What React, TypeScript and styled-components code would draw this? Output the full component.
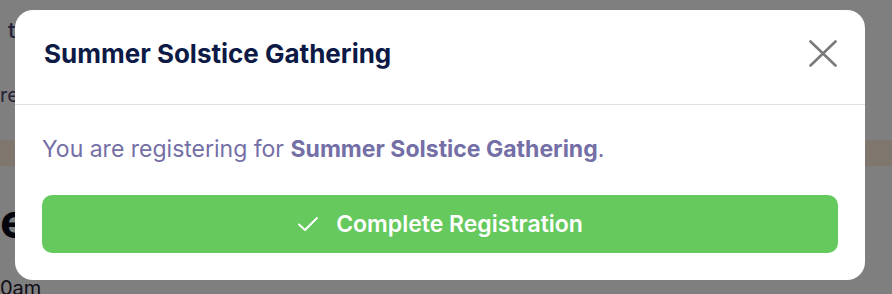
import React from "react";
import styled, { createGlobalStyle } from "styled-components";

const GlobalStyle = createGlobalStyle`
  * { box-sizing: border-box; }
  html, body {
    margin: 0;
    padding: 0;
    width: 892px;
    height: 294px;
    overflow: hidden;
    background: #ffffff;
    font-family: Inter, "Noto Sans", sans-serif;
  }
`;

const Page = styled.div`
  position: relative;
  width: 892px;
  height: 294px;
  overflow: hidden;
`;

const PageContent = styled.div`
  display: flex;
  flex-direction: column;
`;

const PageLine = styled.div<{ $indent: number; $size: number; $weight: number; $color: string; $height: number }>`
  height: ${(p) => p.$height}px;
  padding-left: ${(p) => p.$indent}px;
  font-size: ${(p) => p.$size}px;
  font-weight: ${(p) => p.$weight};
  color: ${(p) => p.$color};
  line-height: ${(p) => p.$height}px;
  white-space: nowrap;
`;

const Strip = styled.div`
  height: 26px;
  background: #ffeedd;
`;

const Overlay = styled.div`
  position: absolute;
  inset: 0;
  background: rgba(0, 0, 0, 0.5);
  display: flex;
  align-items: flex-start;
  justify-content: flex-start;
  padding: 10px 0 0 15px;
`;

const Modal = styled.div`
  width: 850px;
  height: 270px;
  background: #ffffff;
  border-radius: 18px;
  display: flex;
  flex-direction: column;
  overflow: hidden;
`;

const Header = styled.div`
  height: 95px;
  padding: 0 28px 7px 29px;
  display: flex;
  align-items: center;
  justify-content: space-between;
  border-bottom: 1px solid #e3e3e6;
`;

const Title = styled.h2`
  margin: 0;
  font-size: 26px;
  font-weight: 700;
  color: #0c1a45;
`;

const Close = styled.button`
  border: none;
  background: none;
  padding: 0;
  width: 30px;
  height: 30px;
  display: flex;
  align-items: center;
  justify-content: flex-end;
  cursor: pointer;
`;

const Body = styled.div`
  padding: 28px 27px 27px 27px;
  display: flex;
  flex-direction: column;
`;

const Message = styled.p`
  margin: 0 0 30px;
  font-size: 23px;
  line-height: 32px;
  color: #746fa6;

  strong {
    font-weight: 700;
  }
`;

const SubmitButton = styled.button`
  height: 58px;
  border: none;
  border-radius: 10px;
  background: #66c95e;
  color: #ffffff;
  font-family: Inter, "Noto Sans", sans-serif;
  font-size: 23px;
  font-weight: 600;
  display: flex;
  align-items: center;
  justify-content: center;
  gap: 17px;
  cursor: pointer;
`;

const CheckIcon = () => (
  <svg width="22" height="22" viewBox="0 0 22 22" fill="none">
    <path d="M2 11.5L8 17L20 5" stroke="#ffffff" strokeWidth="2" strokeLinecap="round" strokeLinejoin="round" />
  </svg>
);

const CloseIcon = () => (
  <svg width="28" height="27" viewBox="0 0 28 27" fill="none">
    <path d="M1.5 1.5L26.5 25.5M26.5 1.5L1.5 25.5" stroke="#7b7b7b" strokeWidth="2.6" strokeLinecap="round" />
  </svg>
);

export default function App() {
  return (
    <>
      <GlobalStyle />
      <Page>
        <PageContent>
          <PageLine $indent={8} $size={22} $weight={500} $color="#4b4470" $height={60}>
            th
          </PageLine>
          <PageLine $indent={0} $size={20} $weight={400} $color="#4b4470" $height={70}>
            re
          </PageLine>
          <PageLine $indent={0} $size={20} $weight={400} $color="#4b4470" $height={10} />
          <Strip />
          <PageLine $indent={0} $size={48} $weight={700} $color="#0a0a1a" $height={110}>
            e
          </PageLine>
          <PageLine $indent={0} $size={20} $weight={400} $color="#1c1a30" $height={24}>
            0am
          </PageLine>
        </PageContent>
        <Overlay>
          <Modal>
            <Header>
              <Title>Summer Solstice Gathering</Title>
              <Close aria-label="Close">
                <CloseIcon />
              </Close>
            </Header>
            <Body>
              <Message>
                You are registering for <strong>Summer Solstice Gathering</strong>.
              </Message>
              <SubmitButton>
                <CheckIcon />
                Complete Registration
              </SubmitButton>
            </Body>
          </Modal>
        </Overlay>
      </Page>
    </>
  );
}
